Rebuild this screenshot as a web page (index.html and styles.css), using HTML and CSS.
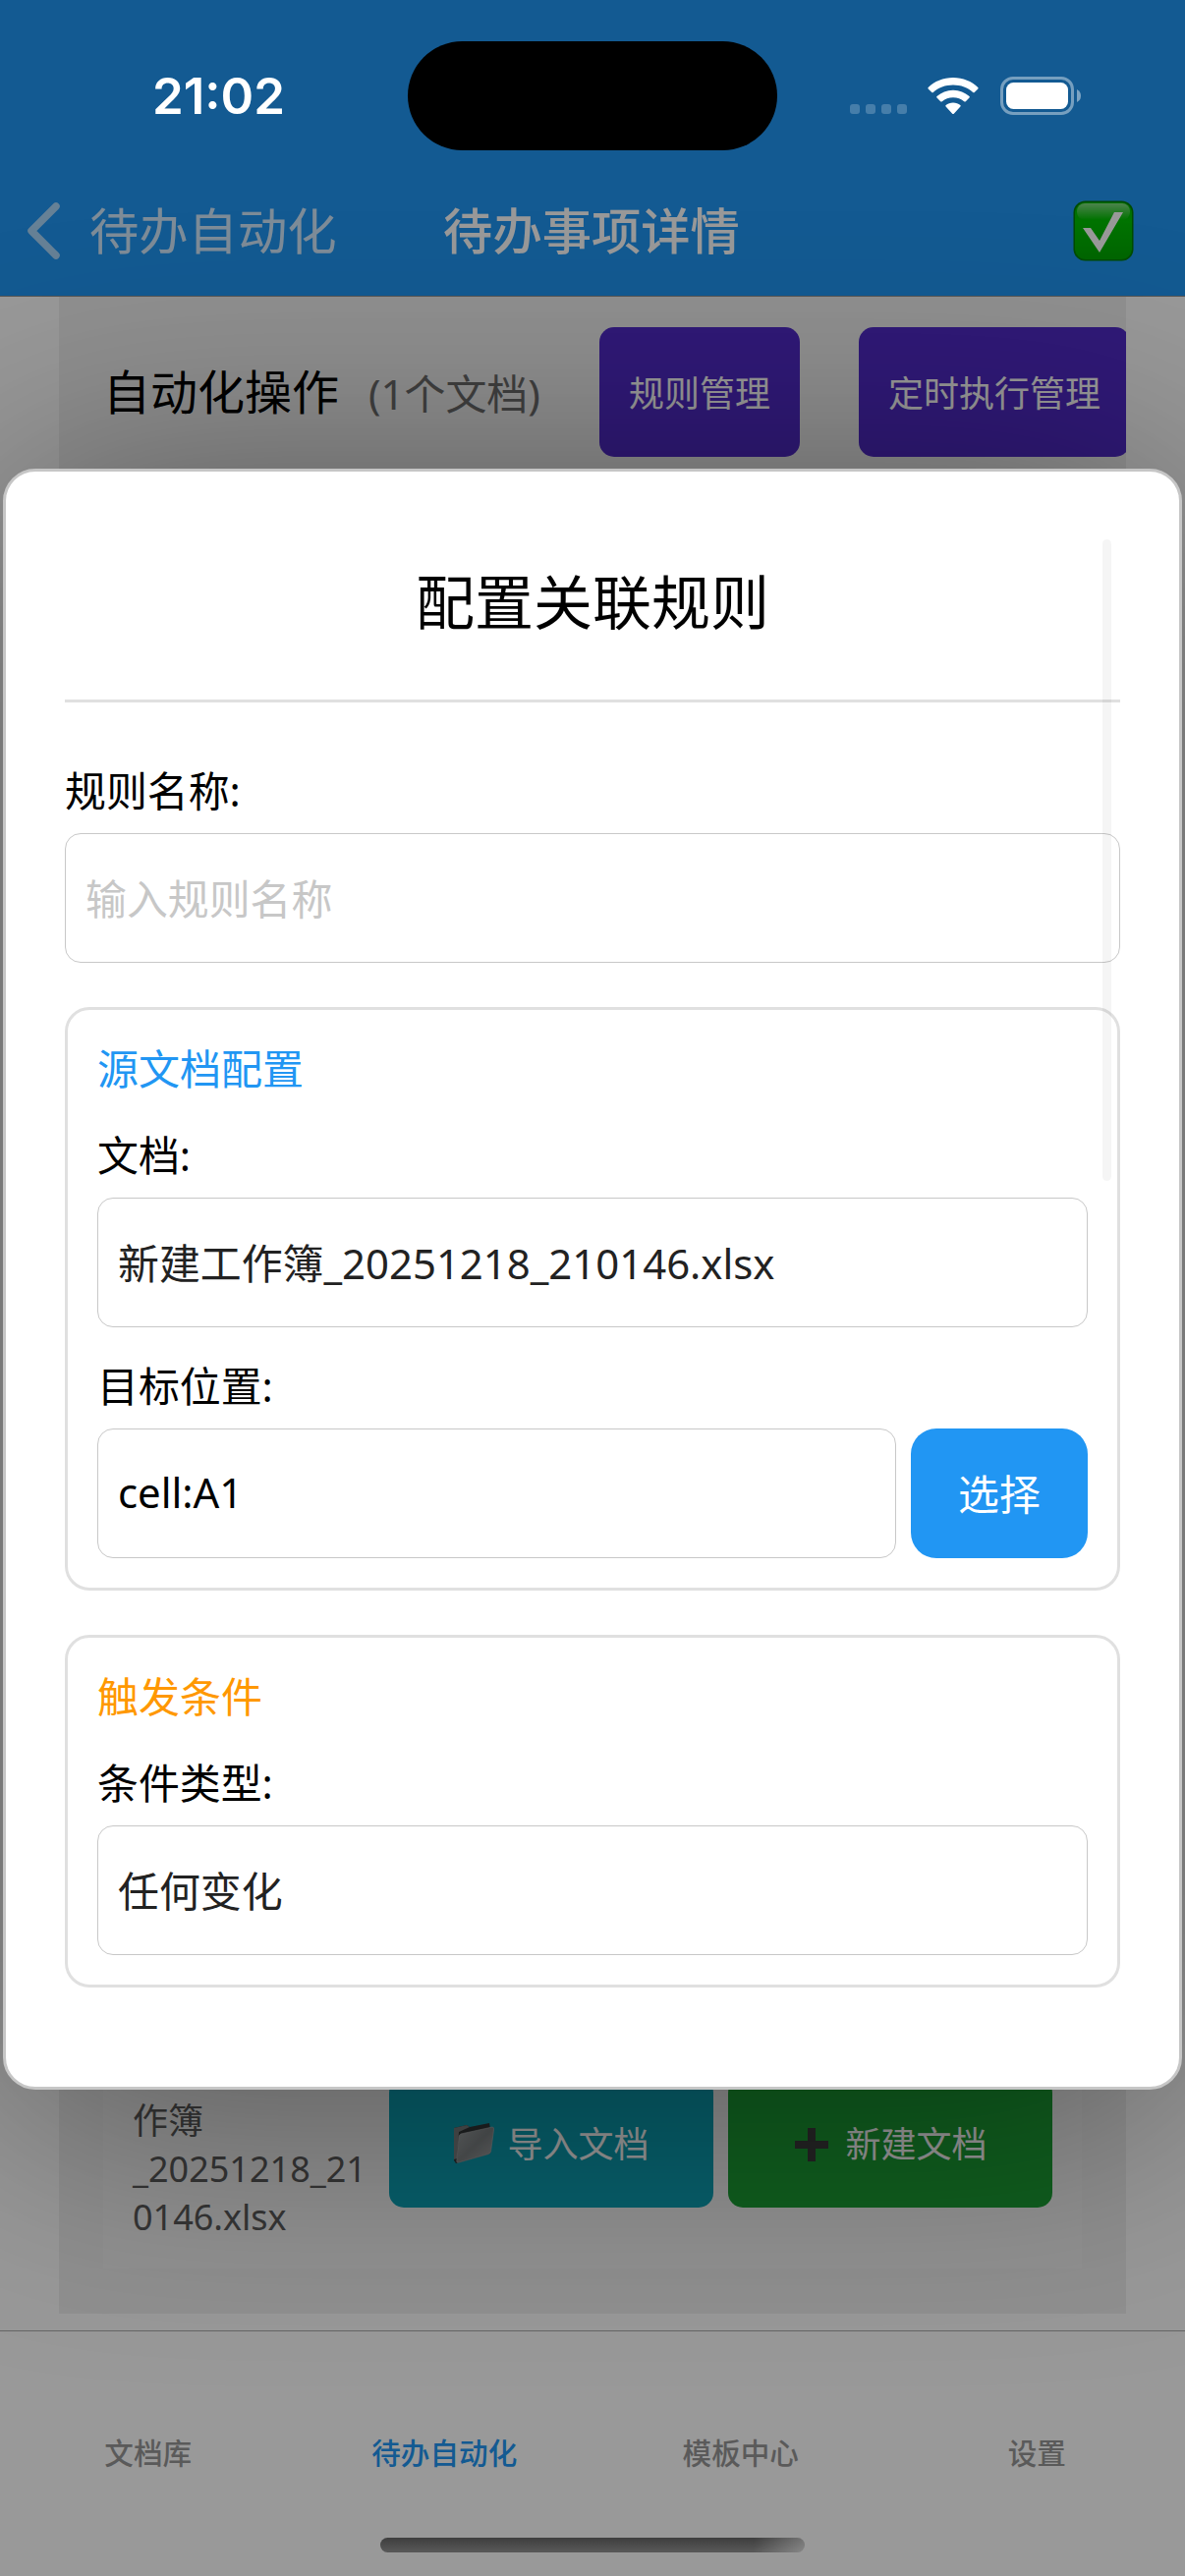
FILE: index.html
```html
<!DOCTYPE html>
<html lang="zh-CN">
<head>
<meta charset="utf-8">
<title>待办事项详情</title>
<link rel="stylesheet" href="styles.css">
</head>
<body>
<div class="app">
  <header class="nav">
    <div class="nav-back">
      <svg class="chevron" viewBox="0 0 34 58"><path d="M30 4 L5 29 L30 54"/></svg>
      <span>待办自动化</span>
    </div>
    <h1 class="nav-title">待办事项详情</h1>
    <div class="nav-action">
      <svg class="check" viewBox="0 0 62 62">
        <defs>
          <linearGradient id="gloss" x1="0" y1="0" x2="0" y2="1"><stop offset="0" stop-color="#fff" stop-opacity=".5"/><stop offset="1" stop-color="#fff" stop-opacity="0"/></linearGradient>
          <linearGradient id="green" x1="0" y1="0" x2="0" y2="1"><stop offset="0" stop-color="#00b800"/><stop offset=".35" stop-color="#00c100"/><stop offset="1" stop-color="#00a800"/></linearGradient>
        </defs>
        <rect x=".5" y=".5" width="61" height="61" rx="12" fill="#007d00"/>
        <rect x="2" y="2" width="58" height="58" rx="11" fill="url(#green)"/>
        <rect x="4" y="3" width="54" height="17" rx="8" fill="url(#gloss)"/>
        <path d="M10 28 H18 L27 41 L42 12 H51 L27 53 Z" fill="#fff"/>
      </svg>
    </div>
  </header>
  <main class="content">
    <section class="panel">
      <div class="panel-head">
        <h2 class="panel-title">自动化操作</h2>
        <span class="panel-count">(1个文档)</span>
        <button class="pill rules">规则管理</button>
        <button class="pill timer">定时执行管理</button>
      </div>
      <div class="doc-card">
        <div class="doc-name">作簿<br>_20251218_21<br>0146.xlsx</div>
        <button class="doc-btn import">
          <svg class="folder" viewBox="0 0 43 42">
            <defs><linearGradient id="fold" x1="0" y1="0" x2="1" y2="1"><stop offset="0" stop-color="#a8adaf"/><stop offset=".5" stop-color="#858a8c"/><stop offset="1" stop-color="#a9aaab"/></linearGradient></defs>
            <path d="M1 5 L14 2 L17 4 L37 0 L38 6 L41 6 L38 31 L3 41 L1 38 Z" fill="#34393b"/>
            <path d="M1 5 L14 2 L17 4 L6 9 L4 36 L1 37 Z" fill="#7f8486"/>
            <path d="M8 11 L40 4 Q42 4 41.500 7 L38.500 29 Q38 31 36 31.500 L6 40 Q3 41 4 37 L6 14 Q6 12 8 11 Z" fill="url(#fold)" stroke="#b4b7b8" stroke-width=".6"/>
          </svg>
          <span>导入文档</span>
        </button>
        <button class="doc-btn create">
          <svg class="plus" viewBox="0 0 34 34"><path d="M13 0 H21 V13 H34 V21 H21 V34 H13 V21 H0 V13 H13 Z"/></svg>
          <span>新建文档</span>
        </button>
      </div>
    </section>
  </main>
  <nav class="tabs">
    <a>文档库</a><a class="on">待办自动化</a><a>模板中心</a><a>设置</a>
  </nav>
</div>

<div class="overlay">
  <div class="modal">
    <h2 class="modal-title">配置关联规则</h2>
    <div class="field">
      <label>规则名称:</label>
      <div class="input placeholder">输入规则名称</div>
    </div>
    <section class="group">
      <h3 class="source">源文档配置</h3>
      <div class="field">
        <label>文档:</label>
        <div class="input picker">新建工作簿_20251218_210146.xlsx</div>
      </div>
      <div class="field">
        <label>目标位置:</label>
        <div class="row">
          <div class="input">cell:A1</div>
          <button class="select">选择</button>
        </div>
      </div>
    </section>
    <section class="group">
      <h3 class="trigger">触发条件</h3>
      <div class="field">
        <label>条件类型:</label>
        <div class="input picker">任何变化</div>
      </div>
    </section>
    <div class="scrollbar"></div>
  </div>
</div>

<div class="status">
  <span class="time">21:02</span>
  <div class="island"></div>
  <div class="indicators">
    <svg class="dots" viewBox="0 0 58 10"><rect width="10" height="10" rx="3"/><rect x="16" width="10" height="10" rx="3"/><rect x="32" width="10" height="10" rx="3"/><rect x="48" width="10" height="10" rx="3"/></svg>
    <svg class="wifi" viewBox="0 0 52 38"><path d="M26 0 C36 0 45 3.800 51.300 10 Q52 10.700 51.300 11.400 L47.700 15 Q47 15.700 46.200 15 C41 10.200 34 7.500 26 7.500 C18 7.500 11 10.200 5.800 15 Q5 15.700 4.300 15 L.7 11.400 Q0 10.700 .7 10 C7 3.800 16 0 26 0 Z"/><path d="M26 12.700 C32.500 12.700 38 15 42.500 19 Q43.300 19.700 42.500 20.500 L38.800 24.200 Q38 25 37.200 24.200 C34 21.600 30.500 20.200 26 20.200 C21.500 20.200 18 21.600 14.800 24.200 Q14 25 13.200 24.200 L9.500 20.500 Q8.700 19.700 9.500 19 C14 15 19.500 12.700 26 12.700 Z"/><path d="M26 25.500 C28.800 25.500 31.500 26.400 33.300 28 Q34.200 28.800 33.400 29.600 L26.800 36.700 Q26 37.500 25.200 36.700 L18.600 29.600 Q17.800 28.800 18.700 28 C20.500 26.400 23.200 25.500 26 25.500 Z"/></svg>
    <svg class="battery" viewBox="0 0 82 39"><rect x="1.500" y="1.500" width="72" height="36" rx="11.500" fill="none" stroke="#fff" stroke-opacity=".42" stroke-width="3"/><rect x="6" y="6" width="63" height="27" rx="7.500" fill="#fff"/><path d="M78 13 Q82 15 82 19.500 Q82 24 78 26 Z" fill="#fff" fill-opacity=".45"/></svg>
  </div>
</div>
<div class="home"></div>
</body>
</html>
```

FILE: styles.css
```css
* { box-sizing: border-box; margin: 0; padding: 0; }
body {
  width: 1206px; height: 2622px; overflow: hidden; position: relative;
  font-family: "Noto Sans", "Noto Sans CJK SC", sans-serif;
  font-size: 41.900px; color: #000; background: #fff;
}
h1, h2, h3 { font-weight: 400; }
button { border: 0; font: inherit; color: #fff; flex: none; }
svg { display: block; flex: none; }

.app { height: 2622px; display: flex; flex-direction: column; }
.nav {
  height: 302px; padding: 168px 52px 0 27px; background: #2196f3; color: #fff;
  display: grid; grid-template-columns: 370px 1fr 370px; align-items: center;
  font-size: 50.300px; flex: none; border-bottom: 1px solid #8c8c8c;
}
.nav-back { display: flex; align-items: center; gap: 30px; color: rgba(255,255,255,.8); }
.nav-back span, .nav-title { line-height: 64px; white-space: nowrap; }
.chevron { width: 34px; height: 58px; fill: none; stroke: rgba(255,255,255,.62); stroke-width: 7.500; stroke-linecap: round; stroke-linejoin: round; }
.nav-title { font-size: 50.300px; font-weight: 500; text-align: center; margin-left: 23px; }
.nav-action { display: flex; justify-content: flex-end; }
.check { width: 62px; height: 62px; }

.content { height: 2070px; flex: none; padding: 0 60px 17px; }
.panel { height: 2053px; background: #f0f0f0; overflow: hidden; display: flex; flex-direction: column; justify-content: space-between; padding: 31px 45px 46px; }
.panel-head { display: flex; align-items: center; height: 132px; margin-right: -60px; white-space: nowrap; }
.panel-title { font-size: 48px; line-height: 64px; width: 270px; }
.panel-count { color: #6c6c6c; width: 235px; padding-bottom: 2px; }
.pill { height: 132px; border-radius: 15px; background: #502ac8; font-size: 36px; padding-bottom: 2px; }
.rules { width: 204px; margin-right: 60px; }
.timer { width: 276px; }
.doc-card { background: #f4f4f4; height: 220px; display: flex; align-items: flex-start; padding: 26px 30px 0; }
.doc-name { width: 261px; padding-top: 19px; font-size: 36px; line-height: 49px; color: #5a5a5a; }
.doc-btn { width: 330px; height: 132px; border-radius: 15px; font-size: 36px; display: flex; align-items: center; justify-content: center; }
.doc-btn span { padding-bottom: 1px; }
.import { background: #0da0b4; margin-right: 15px; gap: 12px; }
.create { background: #1c9e34; gap: 17px; padding-left: 2px; }
.folder { width: 43px; height: 42px; margin-top: 2px; }
.plus { width: 34px; height: 34px; fill: #3c3c3c; margin-top: 3px; }

.tabs { flex: 1; border-top: 1px solid #ababab; display: grid; grid-template-columns: repeat(4, 1fr); padding-top: 102px; text-align: center; font-size: 29.600px; font-weight: 500; line-height: 44px; color: #979797; }
.tabs .on { color: #2196f3; }

.overlay { position: absolute; inset: 0; background: rgba(0,0,0,.4); padding: 477px 3px 0; overflow: hidden; }
.modal {
  position: relative; height: 1650px; background: #fff; border: 3px solid #c6c6c6; border-radius: 33px;
  padding: 60px 60px 0; box-shadow: 0 20px 330px rgba(0,0,0,.42);
}
.modal-title { height: 175px; border-bottom: 3px solid #e0e0e0; padding-top: 27px; font-size: 60px; line-height: 92px; text-align: center; margin-bottom: 60px; }
.field label { display: block; line-height: 60px; margin-bottom: 13px; }
.field + .field { margin-top: 30px; }
.input { height: 132px; border: 1px solid #c8c8c8; border-radius: 16px; padding: 0 20px 3px; display: flex; align-items: center; flex: 1; white-space: nowrap; }
.placeholder { color: #c7c7c7; }
.picker { color: #222; }
.group { border: 3px solid #e0e0e0; border-radius: 25px; margin-top: 45px; padding: 30px; }
.group h3 { font-size: 42px; line-height: 60px; margin-bottom: 28px; }
.source { color: #2196f3; }
.trigger { color: #ff9800; }
.row { display: flex; gap: 15px; }
.select { width: 180px; height: 132px; border-radius: 26px; background: #2196f3; padding-bottom: 3px; }
.scrollbar { position: absolute; right: 69px; top: 69px; width: 9px; height: 653px; border-radius: 5px; background: rgba(0,0,0,.04); }

.status { position: absolute; top: 0; left: 0; width: 1206px; height: 177px; display: grid; grid-template-columns: 415px 376px 1fr; padding-top: 42px; }
.time { font: 600 51px/111px Inter, sans-serif; color: #fff; padding-left: 155px; }
.island { width: 376px; height: 111px; border-radius: 56px; background: #000; }
.indicators { height: 111px; display: flex; align-items: center; padding-left: 74px; }
.dots { width: 58px; height: 10px; margin: 27px 21px 0 0; fill: rgba(255,255,255,.22); }
.wifi { width: 52px; height: 38px; fill: #fff; margin-right: 22px; }
.battery { width: 82px; height: 39px; }
.home { position: absolute; left: 387px; top: 2583px; width: 432px; height: 15px; border-radius: 8px; background: linear-gradient(180deg, transparent 10%, rgba(255,255,255,.12) 90%), linear-gradient(90deg, #404040 88%, #757575); }
```
